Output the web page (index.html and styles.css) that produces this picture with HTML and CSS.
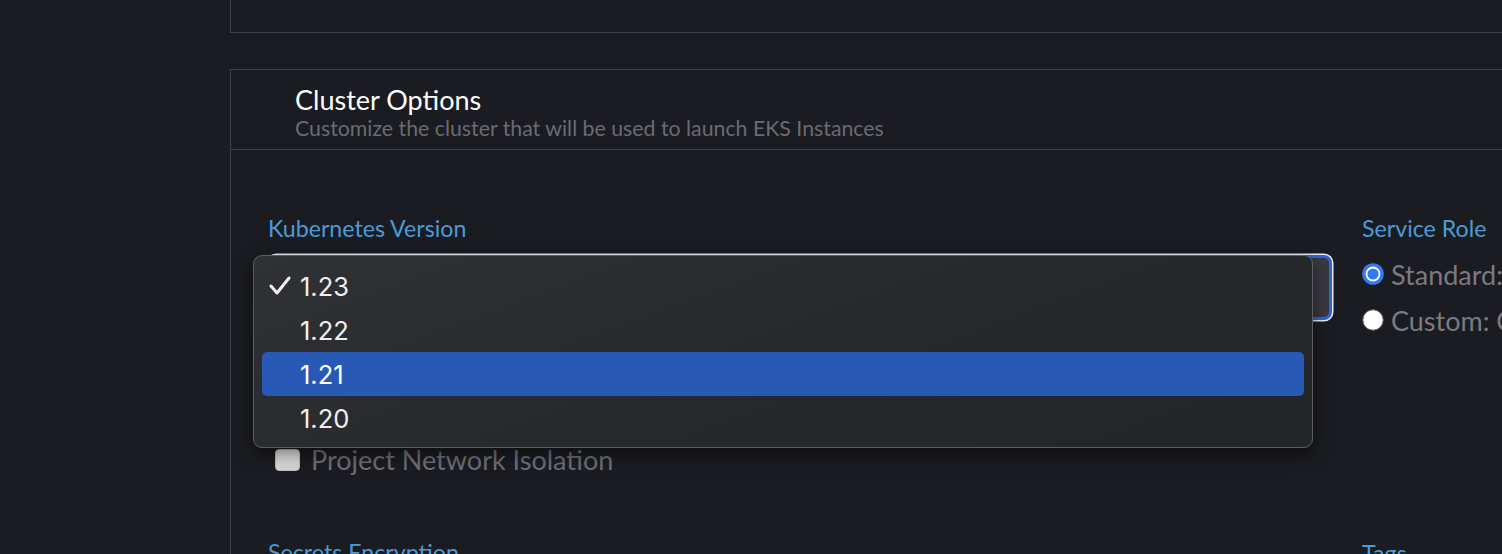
FILE: index.html
```html
<!DOCTYPE html>
<html>
<head>
<meta charset="utf-8">
<link rel="stylesheet" href="styles.css">
</head>
<body>
<div class="page">
  <aside class="sidebar"></aside>
  <main class="main">
    <section class="box box-top"></section>
    <section class="box box-cluster">
      <header class="box-head">
        <h2 class="box-title">Cluster Options</h2>
        <p class="box-sub">Customize the cluster that will be used to launch EKS Instances</p>
      </header>
      <div class="box-body">
        <div class="col col-left">
          <div class="field-label">Kubernetes Version</div>
          <div class="select-wrap">
            <div class="select"></div>
            <div class="popup">
              <div class="opt">
                <svg class="check" width="22" height="20" viewBox="0 0 22 20"><polyline points="2,10 8,17 20,2" fill="none" stroke="#f2f2f2" stroke-width="3" stroke-linecap="round" stroke-linejoin="round"/></svg>
                <span>1.23</span>
              </div>
              <div class="opt"><span>1.22</span></div>
              <div class="opt opt-active"><span>1.21</span></div>
              <div class="opt"><span>1.20</span></div>
            </div>
          </div>
          <div class="check-row">
            <span class="checkbox"></span>
            <span class="check-text">Project Network Isolation</span>
          </div>
          <div class="field-label field-label-low">Secrets Encryption</div>
        </div>
        <div class="col col-right">
          <div class="field-label">Service Role</div>
          <div class="radio-row radio-first">
            <svg class="radio" width="22" height="22" viewBox="0 0 22 22"><circle cx="11" cy="11" r="10.8" fill="#3478f6"/><circle cx="11" cy="11" r="7.4" fill="#ffffff"/><circle cx="11" cy="11" r="5.6" fill="#3478f6"/></svg>
            <span class="radio-text">Standard: Rancher generated service role</span>
          </div>
          <div class="radio-row">
            <svg class="radio" width="22" height="22" viewBox="0 0 22 22"><circle cx="11" cy="11" r="10.2" fill="#ffffff" stroke="#6b6b70" stroke-width="1"/></svg>
            <span class="radio-text">Custom: Choose from your existing service roles</span>
          </div>
          <div class="field-label field-label-right">Tags</div>
        </div>
      </div>
    </section>
  </main>
</div>
</body>
</html>
```
FILE: styles.css
```css
* { box-sizing: border-box; }
html, body {
  margin: 0;
  padding: 0;
  background: #1b1c21;
  overflow: hidden;
}
body {
  font-family: "Lato", "Open Sans", sans-serif;
  width: 1502px;
  height: 554px;
}
.page {
  display: flex;
  height: 554px;
}
.sidebar {
  width: 230px;
  flex: none;
}
.main {
  flex: 1;
  overflow: hidden;
}
.box {
  border-left: 1px solid #3f4046;
}
.box-top {
  height: 33px;
  border-bottom: 1px solid #3f4046;
}
.box-cluster {
  margin-top: 36px;
  border-top: 1px solid #3f4046;
  width: 1400px;
}
.box-head {
  height: 80px;
  border-bottom: 1px solid #3f4046;
  padding: 15px 0 0 64px;
}
.box-title {
  margin: 0;
  font-size: 27px;
  font-weight: 400;
  color: #ffffff;
  line-height: 30px;
}
.box-sub {
  margin: 0;
  font-size: 21.3px;
  line-height: 26px;
  color: #6a6b71;
}
.box-body {
  display: flex;
  gap: 30px;
  padding: 64px 0 0 37px;
}
.col-left {
  width: 1064px;
  flex: none;
}
.col-right {
  width: 400px;
  flex: none;
  white-space: nowrap;
}
.field-label {
  font-size: 23.2px;
  line-height: 28px;
  color: #4a9bd8;
  height: 28px;
}
.select-wrap {
  position: relative;
  margin-top: 13px;
}
.select {
  height: 65px;
  border-radius: 8px;
  background: #3a3940;
  border: 3px solid #2d66d8;
  box-shadow: 0 0 0 1.5px #e8eefc;
}
.popup {
  position: absolute;
  left: -15px;
  top: 0;
  width: 1060px;
  height: 193px;
  padding: 8px 8px 8px;
  border-radius: 9px;
  border: 1px solid #5c5d61;
  background: linear-gradient(160deg, #303135 0%, #27282c 55%, #242529 100%);
  box-shadow: 0 6px 18px rgba(0,0,0,0.5);
  font-family: "Inter", "Noto Sans", sans-serif;
}
.opt {
  position: relative;
  height: 44px;
  display: flex;
  align-items: center;
  padding-left: 38px;
  font-size: 25.5px;
  color: #f0f0f0;
  border-radius: 5px;
}
.opt-active {
  background: #2859b6;
  color: #ffffff;
}
.check {
  position: absolute;
  left: 7px;
  top: 12px;
}
.check-row {
  display: flex;
  align-items: center;
  gap: 11px;
  margin-top: 126px;
  padding-left: 7px;
  height: 28px;
}
.checkbox {
  width: 25px;
  height: 22px;
  border-radius: 4px;
  background: linear-gradient(#e6e6e6, #d4d4d4);
  border: 1px solid #bcbcbc;
  flex: none;
}
.check-text {
  font-size: 27px;
  color: #6e6f75;
  line-height: 28px;
}
.field-label-low {
  margin-top: 64px;
}
.radio-row {
  display: flex;
  align-items: center;
  gap: 7px;
  height: 46px;
  font-size: 27px;
  color: #7a7b81;
}
.radio-first {
  margin-top: 9px;
}
.radio {
  flex: none;
}
.field-label-right {
  margin-top: 196px;
}
```
